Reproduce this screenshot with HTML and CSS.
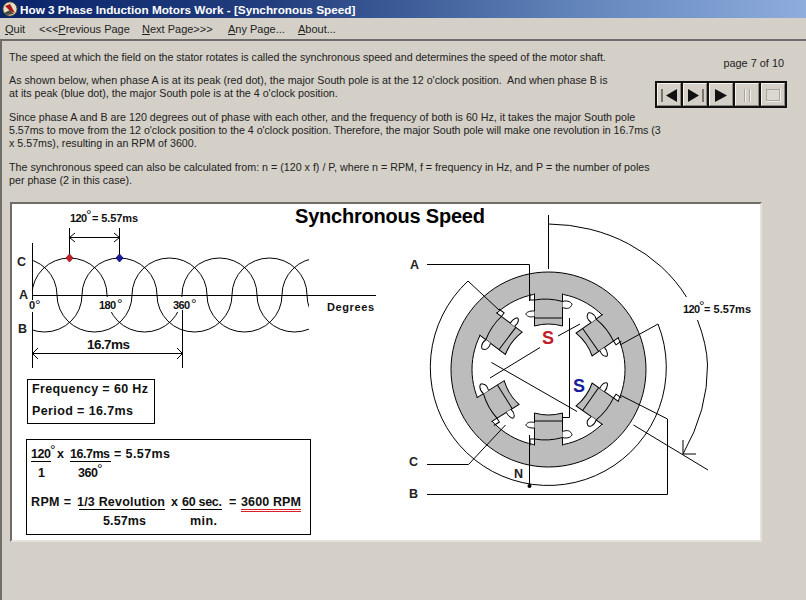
FILE: index.html
```html
<!DOCTYPE html>
<html lang="en">
<head>
<meta charset="utf-8">
<title>How 3 Phase Induction Motors Work</title>
<link rel="stylesheet" href="styles.css">
</head>
<body>
<div class="window">
  <header class="titlebar">
    <svg class="app-icon" viewBox="0 0 16 16" width="16" height="16" aria-hidden="true">
      <circle cx="8" cy="8" r="7.2" fill="#e6dfc8" stroke="#3a3a30"/>
      <path d="M3 5 L8 3 L13 12 L8 10 Z" fill="#b01818"/>
      <path d="M2 12 L8 9 L12 13 L5 14 Z" fill="#504a3c"/>
    </svg>
    <span>How 3 Phase Induction Motors Work - [Synchronous Speed]</span>
  </header>
  <nav class="menubar">
    <span class="m1"><u>Q</u>uit</span>
    <span class="m2">&lt;&lt;&lt;<u>P</u>revious Page</span>
    <span class="m3"><u>N</u>ext Page&gt;&gt;&gt;</span>
    <span class="m4"><u>A</u>ny Page...</span>
    <span class="m5"><u>A</u>bout...</span>
  </nav>
  <main class="panel">
    <div class="top">
      <div class="copy">
        <p class="snug">The speed at which the field on the stator rotates is called the synchronous speed and determines the speed of the motor shaft.</p>
        <p>As shown below, when phase A is at its peak (red dot), the major South pole is at the 12 o'clock position.&nbsp; And when phase B is<br>at its peak (blue dot), the major South pole is at the 4 o'clock position.</p>
        <p class="p3">Since phase A and B are 120 degrees out of phase with each other, and the frequency of both is 60 Hz, it takes the major South pole<br><span class="snug">5.57ms to move from the 12 o'clock position to the 4 o'clock position. Therefore, the major South pole will make one revolution in 16.7ms (3</span><br>x 5.57ms), resulting in an RPM of 3600.</p>
        <p>The synchronous speed can also be calculated from: n = (120 x f) / P, where n = RPM, f = frequency in Hz, and P = the number of poles<br>per phase (2 in this case).</p>
      </div>
      <aside class="side">
        <div class="pageno">page 7 of 10</div>
        <div class="player">
          <div class="btn"><svg viewBox="0 0 24 22" width="24" height="22"><path d="M5 5v13" stroke="#77756e" stroke-width="2"/><path d="M20 5v13L9 11.500z" fill="#111"/></svg></div>
          <div class="btn"><svg viewBox="0 0 24 22" width="24" height="22"><path d="M5 5v13L16 11.500z" fill="#111"/><path d="M20 5v13" stroke="#77756e" stroke-width="2"/></svg></div>
          <div class="btn"><svg viewBox="0 0 24 22" width="24" height="22"><path d="M6 5v13L18 11.500z" fill="#111"/></svg></div>
          <div class="btn"><svg viewBox="0 0 24 22" width="24" height="22"><path d="M10.500 5v13M15.500 5v13" stroke="#f0eee8" stroke-width="1"/><path d="M9.500 5v13M14.500 5v13" stroke="#a8a69e" stroke-width="1"/></svg></div>
          <div class="btn"><svg viewBox="0 0 24 22" width="24" height="22"><rect x="5.500" y="5.500" width="13" height="11" fill="#dcd8d0" stroke="#a8a69e"/><path d="M5 17.500h14.500V5" fill="none" stroke="#f0eee8"/></svg></div>
        </div>
      </aside>
    </div>
    <figure class="figure">
      <svg class="diagram" viewBox="12 204 748 335" width="748" height="335" role="img">
        <defs>
          <clipPath id="wave-clip"><rect x="32" y="250" width="277" height="90"/></clipPath>
          <path id="wave" fill="none" stroke="#000" d="M0,0 a37.500,37 0 0 1 75,0 a37.500,37 0 0 0 75,0 a37.500,37 0 0 1 75,0 a37.500,37 0 0 0 75,0 a37.500,37 0 0 1 75,0 a37.500,37 0 0 0 75,0"/>
          <g id="pole">
            <path d="M-14,-78 H14 V-43.500 Q0,-47.500 -14,-43.500 Z" fill="#bcbcbc"/>
            <path d="M-14,-76 V-43.500 Q0,-47.500 14,-43.500 V-76" fill="none" stroke="#000"/>
            <path d="M14,-68 C20,-70 25,-66 23,-64 C21,-60 17,-61 14,-62 M-14,-58.500 C-20,-59 -24,-56 -22,-54.500 C-20,-52 -16,-52.500 -14,-53" fill="#fff" stroke="#000"/>
            <path d="M-18.500,-76 V-69.500 H-14 Q0,-72 14,-68 M-14,-51.500 H14" fill="none" stroke="#000"/>
          </g>
        </defs>

        <g class="wires">
          <g clip-path="url(#wave-clip)">
            <use href="#wave" x="32" y="295"/>
            <use href="#wave" x="-68" y="295"/>
            <use href="#wave" x="-18" y="295"/>
          </g>
          <rect class="mask" x="97" y="297" width="28" height="15"/>
          <rect class="mask" x="171" y="297" width="27" height="15"/>
          <path d="M32.500,243 V300 M32.500,312 V368 M32.500,295.500 H376 M182.500,310 V368 M32.500,353.500 H182.500"/>
          <path d="M69.500,228 V258 M119.500,228 V258 M69.500,237.500 H119.500 M75,233 L69.500,237.500 L75,242 M114,233 L119.500,237.500 L114,242 M38,348 L32.500,353.500 L38,359 M177,348 L182.500,353.500 L177,359"/>
        </g>
        <path d="M69.500,254 L73,258 L69.500,262 L66,258 Z" fill="#c0202a" stroke="#a01c24"/>
        <path d="M119.500,254 L123,258 L119.500,262 L116,258 Z" fill="#1a1a9a" stroke="#14147a"/>

        <g class="label">
          <text x="70" y="222" textLength="17">120</text><text class="deg" x="86" y="219.500">°</text><text x="92" y="222" textLength="46">= 5.57ms</text>
          <text class="lg" x="17" y="266">C</text><text class="lg" x="19" y="299">A</text><text class="lg" x="18" y="333">B</text>
          <text x="29" y="309">0</text><text class="deg" x="35" y="309.500">°</text>
          <text x="99" y="309" textLength="17">180</text><text class="deg" x="117" y="308.500">°</text>
          <text x="173" y="309" textLength="17">360</text><text class="deg" x="191" y="308.500">°</text>
          <text x="327" y="311" textLength="47">Degrees</text>
          <text class="big" x="87" y="349" textLength="43">16.7ms</text>
        </g>
        <text class="heading" x="295" y="223" textLength="190">Synchronous Speed</text>

        <rect class="box" x="27.500" y="379.500" width="127" height="44"/>
        <rect class="box" x="26.500" y="439.500" width="284" height="95"/>
        <g class="label boxed">
          <text x="32" y="393" textLength="116">Frequency = 60 Hz</text>
          <text x="32" y="415" textLength="101">Period = 16.7ms</text>
          <text x="31" y="458" textLength="20">120</text><text class="deg" x="50" y="454.500">°</text>
          <text x="57" y="458">x</text>
          <text x="70" y="458" textLength="40">16.7ms</text>
          <text x="114" y="458" textLength="56">= 5.57ms</text>
          <text x="38" y="477">1</text>
          <text x="78" y="477" textLength="20">360</text><text class="deg" x="97" y="473.500">°</text>
          <text x="31" y="506" textLength="40">RPM =</text>
          <text x="77" y="506" textLength="88">1/3 Revolution</text>
          <text x="171" y="506">x</text>
          <text x="182" y="506" textLength="40">60 sec.</text>
          <text x="229" y="506">=</text>
          <text x="241" y="506" textLength="60">3600 RPM</text>
          <text x="103" y="525" textLength="43">5.57ms</text>
          <text x="190" y="525" textLength="27">min.</text>
        </g>
        <path class="thin" d="M31,461.500 H51 M70,461.500 H111 M79,509.500 H165 M181,509.500 H222"/>
        <path class="red-rule" d="M241,509.500 H301 M241,511.500 H301"/>

        <path d="M548.500,272 a97.500,97.500 0 1,1 -0.010,0 Z M548.500,293 a76.500,76.500 0 1,0 0.010,0 Z" fill="#bcbcbc" fill-rule="evenodd" stroke="#000"/>
        <use href="#pole" transform="translate(548.500 369.500)"/>
        <use href="#pole" transform="translate(548.500 369.500) rotate(55) scale(-1 1)"/>
        <use href="#pole" transform="translate(548.500 369.500) rotate(125)"/>
        <use href="#pole" transform="translate(548.500 369.500) scale(1 -1)"/>
        <use href="#pole" transform="translate(548.500 369.500) rotate(-122)"/>
        <use href="#pole" transform="translate(548.500 369.500) rotate(-53) scale(-1 1)"/>

        <g class="wires">
          <path d="M427,264.500 H529.500 V301"/>
          <path d="M427,494.500 H667.500 V419 L620,395"/>
          <path d="M427,464.500 H468.500 L505.500,425"/>
          <path d="M529.500,435 V486"/>
          <path d="M499,310 L468,281 A118,118 0 1 0 658,324 L620,345"/>
          <path d="M548.500,215 V269"/>
          <path d="M548.500,224 A159,140.500 0 0 1 686.500,297"/>
          <path d="M697.500,320 Q707,345 707.500,365 Q708,410 683,454"/>
          <path d="M683,440 V454 H696 M633.500,425 L708,470"/>
          <path d="M490,378 L540,347.500 M558,336 L580,324"/>
          <path d="M491.500,362.500 L577,411.500 M569.500,318 V417.500 H562"/>
        </g>
        <circle cx="529.500" cy="486" r="2" fill="#000"/>

        <g class="label">
          <text class="lg" x="410" y="269">A</text>
          <text class="lg" x="409" y="466">C</text>
          <text class="lg" x="409" y="498">B</text>
          <text class="lg" x="514" y="478">N</text>
          <text x="683" y="313" textLength="17">120</text><text class="deg" x="699" y="310.500">°</text><text x="704" y="313" textLength="47">= 5.57ms</text>
        </g>
        <text class="pole-s red" x="542" y="344">S</text>
        <text class="pole-s blue" x="573" y="392">S</text>
      </svg>
    </figure>
  </main>
</div>
</body>
</html>
```
FILE: styles.css
```css
* { box-sizing: border-box; }
html, body { margin: 0; height: 100%; }
body { background: #d4d0c8; font-family: "Liberation Sans", Arial, sans-serif; color: #222; overflow: hidden; }
.window { width: 806px; height: 600px; display: flex; flex-direction: column; }
.titlebar { height: 18px; display: flex; align-items: center; gap: 2px; padding-left: 2px; color: #fff; font-weight: bold; font-size: 11.750px; background: linear-gradient(90deg, #0a246a 0%, #24407f 35%, #5f82b8 70%, #8eaddd 100%); white-space: nowrap; }
.app-icon { flex: none; }
.menubar { height: 21px; display: flex; align-items: center; font-size: 11px; color: #222; white-space: nowrap; }
.menubar span { flex: none; }
.m1 { margin-left: 5px; width: 34px; }
.m2 { width: 103px; }
.m3 { width: 86px; }
.m4 { width: 70px; }
.panel { flex: 1; border-top: 2px solid #6f6d68; border-left: 2px solid #6f6d68; padding: 10px 0 0 7px; min-height: 0; }
.top { display: flex; height: 151px; }
.copy { width: 685px; font-size: 10.700px; line-height: 13px; flex: none; }
.copy p { margin: 0 0 10px; white-space: nowrap; }
.copy .p3 { margin: 11px 0; }
.copy .snug { letter-spacing: -0.04px; }
.side { flex: none; display: flex; flex-direction: column; align-items: flex-end; width: 103px; }
.pageno { font-size: 10.900px; margin-top: 6px; margin-right: 13px; }
.player { display: flex; margin-top: 12px; margin-right: 10px; border: 2px solid #111; background: #111; gap: 2px; }
.btn { width: 24px; height: 23px; background: #d4d0c8; border: 1px solid; border-color: #f4f2ec #8a8880 #8a8880 #f4f2ec; display: flex; align-items: center; justify-content: center; }
.btn svg { display: block; margin: -1px; flex: none; }
.figure { margin: 0; width: 752px; height: 340px; margin-left: 1px; background: #fff; border: 2px solid; border-color: #6f6d68 #e4e2dc #e4e2dc #6f6d68; }
.diagram { display: block; }
.wires path { fill: none; stroke: #000; }
.mask { fill: #fff; }
.thin { fill: none; stroke: #000; }
.red-rule { fill: none; stroke: #d8202a; }
.box { fill: none; stroke: #000; }
.label text { font: bold 11px "Liberation Sans", Arial, sans-serif; fill: #111; }
.label .lg { font-size: 12.500px; fill: #222; }
.label .big { font-size: 13.500px; }
.boxed text { font-size: 12.500px; }
.label .deg { font-size: 14px; font-weight: normal; }
.heading { font: bold 20px "Liberation Sans", Arial, sans-serif; fill: #000; }
.pole-s { font: bold 18px "Liberation Sans", Arial, sans-serif; }
.red { fill: #c0202a; }
.blue { fill: #1a1a9a; }
```
